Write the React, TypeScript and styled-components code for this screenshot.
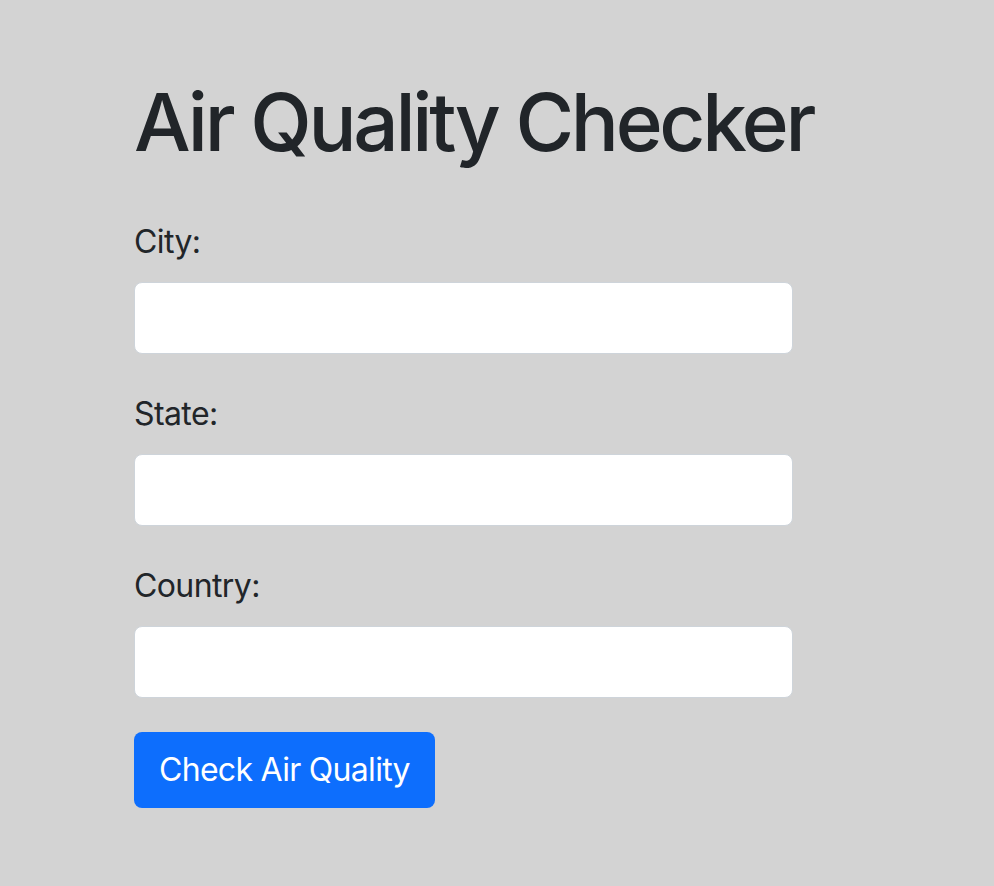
import React from "react";
import styled, { createGlobalStyle } from "styled-components";

const GlobalStyle = createGlobalStyle`
  html, body {
    margin: 0;
    padding: 0;
    background: #d3d3d3;
  }
  body {
    font-family: Inter, "Liberation Sans", Arial, sans-serif;
    color: #212529;
  }
  * { box-sizing: border-box; }
`;

const Page = styled.main`
  min-height: 886px;
  padding: 74px 0 0 134px;
`;

const Title = styled.h1`
  margin: 0 0 48px;
  font-size: 80px;
  line-height: 96px;
  font-weight: 500;
  letter-spacing: -3.3px;
`;

const Form = styled.form`
  display: flex;
  flex-direction: column;
  width: 659px;
`;

const Field = styled.div`
  display: flex;
  flex-direction: column;
  margin-bottom: 36px;
`;

const Label = styled.label`
  font-size: 32px;
  line-height: 48px;
  letter-spacing: -0.6px;
  margin-bottom: 16px;
`;

const Input = styled.input`
  height: 72px;
  width: 100%;
  background: #fff;
  border: 1px solid #ced4da;
  border-radius: 8px;
  font-size: 32px;
  padding: 0 24px;
  font-family: inherit;
  outline: none;
`;

const Button = styled.button`
  align-self: flex-start;
  margin-top: -2px;
  height: 76px;
  padding: 0 25px;
  background: #0d6efd;
  color: #fff;
  border: none;
  border-radius: 8px;
  font-family: inherit;
  font-size: 32px;
  line-height: 48px;
  letter-spacing: -0.7px;
  cursor: pointer;
`;

export default function App() {
  return (
    <>
      <GlobalStyle />
      <Page>
        <Title>Air Quality Checker</Title>
        <Form onSubmit={(e) => e.preventDefault()}>
          <Field>
            <Label htmlFor="city">City:</Label>
            <Input id="city" type="text" />
          </Field>
          <Field>
            <Label htmlFor="state">State:</Label>
            <Input id="state" type="text" />
          </Field>
          <Field>
            <Label htmlFor="country">Country:</Label>
            <Input id="country" type="text" />
          </Field>
          <Button type="submit">Check Air Quality</Button>
        </Form>
      </Page>
    </>
  );
}
